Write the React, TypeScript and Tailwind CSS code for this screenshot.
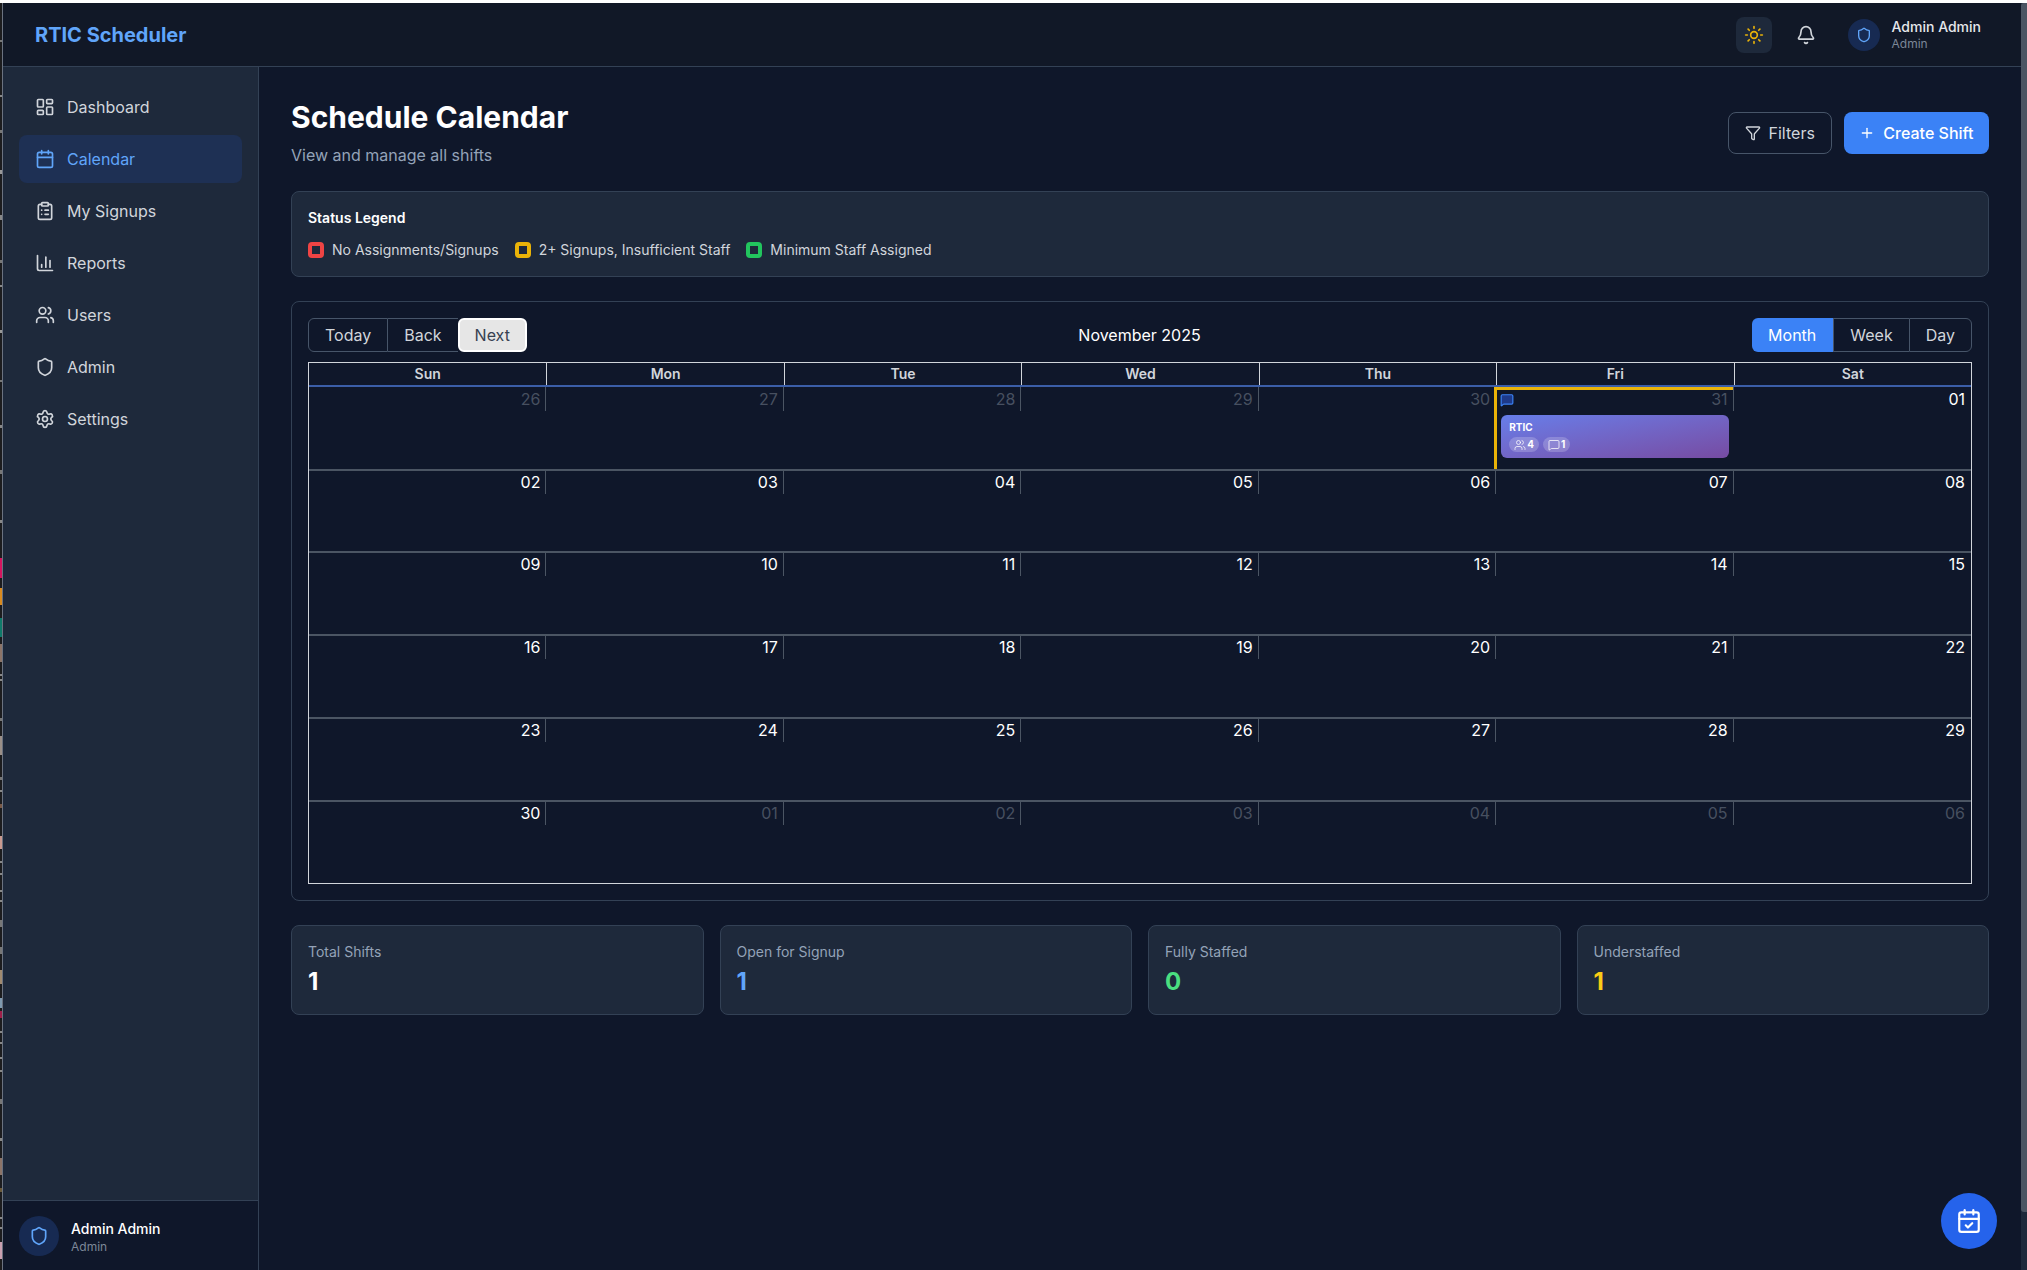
import {
  Bell,
  CalendarCheck,
  Calendar,
  ChartColumn,
  ClipboardList,
  Funnel,
  LayoutDashboard,
  MessageSquare,
  Plus,
  Settings,
  Shield,
  Sun,
  Users,
} from "lucide-react";

const navItems = [
  { name: "Dashboard", icon: LayoutDashboard },
  { name: "Calendar", icon: Calendar, active: true },
  { name: "My Signups", icon: ClipboardList },
  { name: "Reports", icon: ChartColumn },
  { name: "Users", icon: Users },
  { name: "Admin", icon: Shield },
  { name: "Settings", icon: Settings },
];

const weekDays = ["Sun", "Mon", "Tue", "Wed", "Thu", "Fri", "Sat"];

const weeks = [
  ["26", "27", "28", "29", "30", "31", "01"],
  ["02", "03", "04", "05", "06", "07", "08"],
  ["09", "10", "11", "12", "13", "14", "15"],
  ["16", "17", "18", "19", "20", "21", "22"],
  ["23", "24", "25", "26", "27", "28", "29"],
  ["30", "01", "02", "03", "04", "05", "06"],
];

const stats = [
  { label: "Total Shifts", value: "1", color: "text-white" },
  { label: "Open for Signup", value: "1", color: "text-[#60a5fa]" },
  { label: "Fully Staffed", value: "0", color: "text-[#4ade80]" },
  { label: "Understaffed", value: "1", color: "text-[#facc15]" },
];

const legend = [
  { label: "No Assignments/Signups", color: "border-[#ef4444]" },
  { label: "2+ Signups, Insufficient Staff", color: "border-[#eab308]" },
  { label: "Minimum Staff Assigned", color: "border-[#22c55e]" },
];

// sliver of the window behind the browser, running down the left edge: [top, height, colour]
const edgeBits: [number, number, string][] = [
  [40, 2, "#777"], [95, 2, "#888"], [130, 3, "#777"], [170, 4, "#999"], [215, 5, "#888"],
  [260, 3, "#777"], [285, 2, "#888"], [330, 3, "#999"], [380, 2, "#777"], [425, 3, "#888"],
  [470, 4, "#777"], [520, 3, "#888"], [558, 20, "#d6145f"], [588, 17, "#d98a1f"], [618, 19, "#0f7a6a"],
  [644, 18, "#8c7468"], [674, 2, "#888"], [679, 2, "#888"], [718, 3, "#777"], [736, 19, "#9a8f88"],
  [777, 3, "#777"], [790, 2, "#888"], [804, 4, "#7a5a48"], [836, 13, "#c99a90"], [861, 2, "#888"],
  [873, 2, "#888"], [890, 2, "#888"], [900, 2, "#888"], [920, 7, "#777"], [947, 7, "#777"],
  [970, 14, "#a08a70"], [998, 10, "#7f9ab0"], [1011, 7, "#a01f4a"], [1031, 2, "#888"], [1042, 2, "#888"],
  [1057, 2, "#888"], [1070, 2, "#888"], [1099, 5, "#777"], [1138, 3, "#888"], [1158, 17, "#8c7468"],
  [1188, 4, "#6b5a3a"], [1217, 2, "#888"], [1227, 2, "#888"], [1242, 17, "#c9a0b0"],
];

const isOffRange = (week: number, day: number) =>
  (week === 0 && day < 6) || (week === 5 && day > 0);

const rowHeight = (week: number) => {
  if (week === 0) return "h-[82px]";
  if (week === 1) return "h-[82px] border-t-2 border-[#4b5563]";
  return "h-[83px] border-t-2 border-[#4b5563]";
};

const ShiftEvent = () => (
  <div className="mt-[4px] mr-[5px] ml-[4px] h-[43px] rounded-md bg-gradient-to-br from-[#667eea] to-[#764ba2] px-2 pt-[5px]">
    <div className="text-[10px] leading-[14px] font-bold text-white">RTIC</div>
    <div className="mt-[3px] flex gap-1">
      <span className="flex h-[15px] items-center gap-[1px] rounded-full bg-white/20 px-[5px] text-[10px] font-bold text-white">
        <Users size={12} strokeWidth={1.5} />4
      </span>
      <span className="flex h-[15px] items-center gap-[1px] rounded-full bg-white/20 px-[5px] text-[10px] font-bold text-white">
        <MessageSquare size={12} strokeWidth={1.5} />1
      </span>
    </div>
  </div>
);

const CalendarGrid = () => (
  <div className="mt-[10px] border border-[#d1d5db]">
    <div className="grid grid-cols-7 border-b-2 border-[#3b5ea8]">
      {weekDays.map((d, i) => (
        <div
          key={d}
          className={`h-[22px] text-center text-sm leading-[22px] font-semibold text-[#d1d5db] ${
            i > 0 ? "border-l border-[#d1d5db]" : ""
          }`}
        >
          {d}
        </div>
      ))}
    </div>
    {weeks.map((week, w) => (
      <div key={w} className={`grid grid-cols-7 ${rowHeight(w)}`}>
        {week.map((date, d) => {
          const today = w === 0 && d === 5;
          return (
            <div key={d} className={today ? "-ml-[2px] border-l-[3px] border-[#eab308]" : ""}>
              <div
                className={`relative flex items-center justify-end pr-[6px] text-base ${
                  w === 0 ? "h-[24px]" : "h-[23px] pb-[1px]"
                } ${d > 0 && !today ? "-ml-[1px] border-l border-[#4b5563]" : ""} ${
                  today ? "border-t-[3px] border-[#eab308] pb-[3px] text-[#374151]" : ""
                } ${isOffRange(w, d) ? "text-[#475060]" : today ? "" : "text-white"}`}
              >
                {today && (
                  <MessageSquare
                    size={14}
                    className="absolute top-[3px] left-[3px] fill-[#1e3a8a] text-[#3b82f6]"
                  />
                )}
                {date}
              </div>
              {today && <ShiftEvent />}
            </div>
          );
        })}
      </div>
    ))}
  </div>
);

export default function App() {
  return (
    <div className="flex h-[1270px] flex-col overflow-hidden bg-[#0f172a] font-['Inter',sans-serif] text-white">
      <div className="h-[3px] bg-white" />
      <div className="flex min-h-0 flex-1">
        <div className="w-[3px] border-r border-[#6b7280] bg-[#1c1c1e]">
          {edgeBits.map(([top, height, color], i) => (
            <div
              key={i}
              style={{
                marginTop: top - (i > 0 ? edgeBits[i - 1][0] + edgeBits[i - 1][1] : 3),
                height,
                background: color,
              }}
            />
          ))}
        </div>
        <div className="flex min-w-0 flex-1 flex-col">
          <header className="flex h-[64px] shrink-0 items-center justify-between border-b border-[#334155] bg-[#111827] pr-[40px] pl-[32px]">
            <span className="text-xl font-bold text-[#60a5fa]">RTIC Scheduler</span>
            <div className="flex items-center">
              <button className="flex h-9 w-9 items-center justify-center rounded-lg bg-[#1e293b]">
                <Sun size={20} className="text-[#eab308]" />
              </button>
              <Bell size={20} className="ml-[24px] text-[#d1d5db]" />
              <div className="ml-[32px] flex h-8 w-8 items-center justify-center rounded-full bg-[#172a52]">
                <Shield size={16} className="text-[#60a5fa]" />
              </div>
              <div className="ml-3">
                <div className="text-sm leading-[18px] font-medium text-[#e5e7eb]">Admin Admin</div>
                <div className="text-xs leading-[16px] text-[#7c8798]">Admin</div>
              </div>
            </div>
          </header>

          <div className="flex min-h-0 flex-1">
            <aside className="flex w-[256px] shrink-0 flex-col border-r border-[#334155] bg-[#1e293b]">
              <nav className="flex flex-1 flex-col gap-1 p-4">
                {navItems.map((item) => (
                  <div
                    key={item.name}
                    className={`flex h-12 items-center gap-3 rounded-lg px-4 text-base ${
                      item.active ? "bg-[#1e3054] text-[#60a5fa]" : "text-[#d1d5db]"
                    }`}
                  >
                    <item.icon size={20} />
                    {item.name}
                  </div>
                ))}
              </nav>
              <div className="flex h-[70px] items-center gap-3 border-t border-[#334155] bg-[#0f172a] px-4">
                <div className="flex h-10 w-10 items-center justify-center rounded-full bg-[#172a52]">
                  <Shield size={20} className="text-[#60a5fa]" />
                </div>
                <div className="pt-[2px]">
                  <div className="text-sm leading-[20px] font-medium text-white">Admin Admin</div>
                  <div className="text-xs leading-[16px] text-[#7c8798]">Admin</div>
                </div>
              </div>
            </aside>

            <main className="min-w-0 flex-1 px-8 pt-[32px]">
              <div className="flex items-start justify-between">
                <div>
                  <h1 className="text-3xl leading-[36px] font-bold text-white">Schedule Calendar</h1>
                  <p className="mt-2 text-base leading-[24px] text-[#94a3b8]">View and manage all shifts</p>
                </div>
                <div className="mt-[13px] flex gap-3">
                  <button className="flex h-[42px] items-center gap-2 rounded-lg border border-[#475569] px-4 text-base text-[#d1d5db]">
                    <Funnel size={16} />
                    Filters
                  </button>
                  <button className="flex h-[42px] items-center gap-2 rounded-lg bg-[#3b82f6] px-[15.5px] text-base font-medium text-white">
                    <Plus size={16} />
                    Create Shift
                  </button>
                </div>
              </div>

              <section className="mt-[24px] rounded-lg border border-[#334155] bg-[#1e293b] p-4">
                <h3 className="text-sm leading-[20px] font-semibold text-white">Status Legend</h3>
                <div className="mt-3 flex gap-4">
                  {legend.map((l) => (
                    <div key={l.label} className="flex items-center gap-2 text-sm leading-[20px] text-[#d1d5db]">
                      <span className={`h-4 w-4 rounded-[4px] border-4 bg-[#1e293b] ${l.color}`} />
                      {l.label}
                    </div>
                  ))}
                </div>
              </section>

              <section className="mt-[24px] rounded-lg border border-[#334155] p-4">
                <div className="flex items-center justify-between">
                  <div className="flex h-[34px] text-base text-[#d1d5db]">
                    <button className="rounded-l-md border border-[#475569] px-4">Today</button>
                    <button className="border-y border-[#475569] px-4">Back</button>
                    <button className="rounded-md border-2 border-white bg-[#e6e6e6] px-[15px] text-[#374151]">Next</button>
                  </div>
                  <span className="text-base text-white">November 2025</span>
                  <div className="flex h-[34px] text-base text-[#d1d5db]">
                    <button className="rounded-l-md bg-[#3b82f6] pr-[17px] pl-[16px] text-white">Month</button>
                    <button className="border-y border-l border-[#475569] px-4">Week</button>
                    <button className="rounded-r-md border border-[#475569] px-4">Day</button>
                  </div>
                </div>
                <CalendarGrid />
              </section>

              <section className="mt-[24px] grid grid-cols-4 gap-4">
                {stats.map((s) => (
                  <div key={s.label} className="h-[90px] rounded-lg border border-[#334155] bg-[#1e293b] p-4">
                    <div className="text-sm leading-[20px] text-[#94a3b8]">{s.label}</div>
                    <div className={`mt-[4px] text-2xl leading-[32px] font-bold ${s.color}`}>{s.value}</div>
                  </div>
                ))}
              </section>
            </main>
          </div>
        </div>
        <div className="w-[6px] shrink-0 bg-[#1e293b]">
          <div className="h-[1209px] rounded-l-[3px] bg-[#4b5563]" />
        </div>
      </div>
      <button className="fixed top-[1193px] left-[1941px] flex h-14 w-14 items-center justify-center rounded-full bg-[#2563eb] text-white">
        <CalendarCheck size={26} />
      </button>
    </div>
  );
}
